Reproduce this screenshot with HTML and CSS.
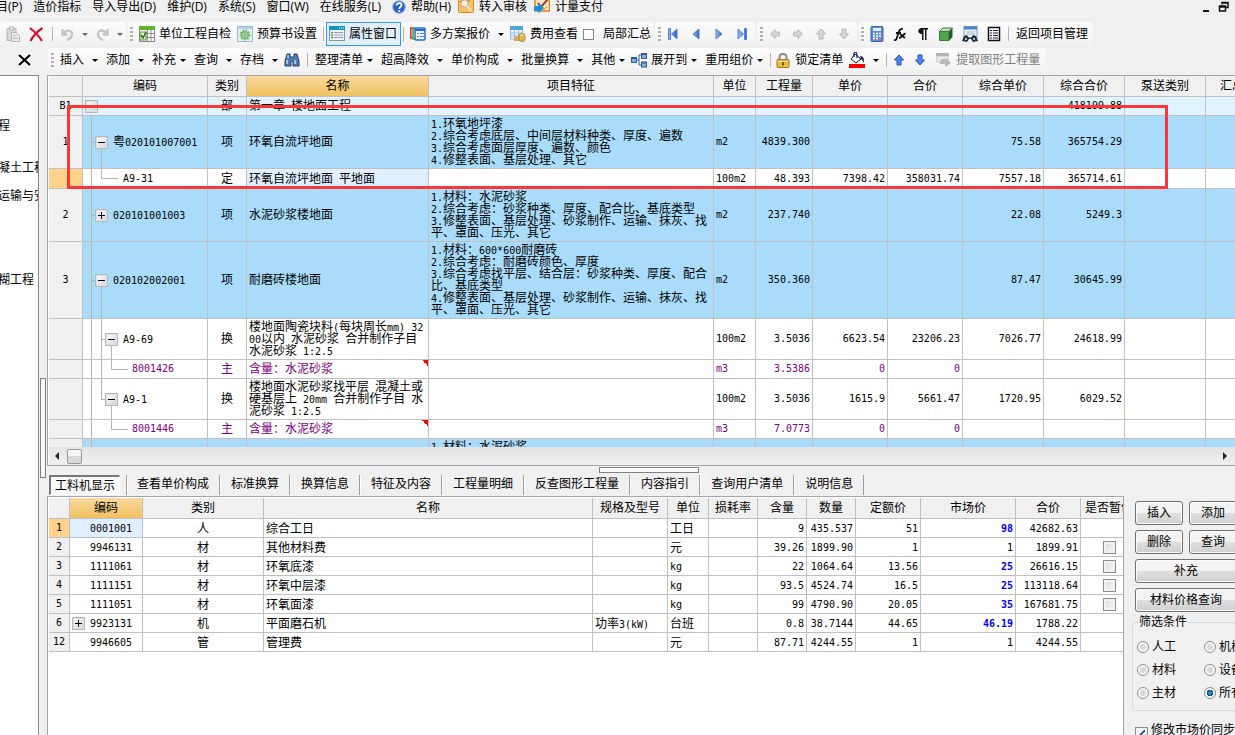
FILE: index.html
```html
<!DOCTYPE html>
<html lang="zh-CN">
<head>
<meta charset="utf-8">
<title>工程计价</title>
<link rel="stylesheet" href="styles.css">
</head>
<body>
<svg class="defs" aria-hidden="true">
  <defs>
    <linearGradient id="blue" x1="0" x2="1"><stop offset="0" stop-color="#9cc0f4"/><stop offset="1" stop-color="#2b5fd0"/></linearGradient>
    <symbol id="i-up" viewBox="0 0 10 12"><path d="M5 1l4.500 5h-2.500v5h-4v-5H.5z" stroke-width="1"/></symbol>
    <symbol id="i-left" viewBox="0 0 10 12"><path d="M.5 6l4.500-4.500v2.500h4.500v4H5v2.500z" stroke-width="1"/></symbol>
  </defs>
</svg>

<header class="top">
  <nav class="menu">
    <a href="#">项目(P)</a><a href="#">造价指标</a><a href="#">导入导出(D)</a><a href="#">维护(D)</a><a href="#">系统(S)</a><a href="#">窗口(W)</a><a href="#">在线服务(L)</a>
    <a href="#" class="wide"><svg width="14" height="14" viewBox="0 0 14 14"><circle cx="7" cy="7" r="6.300" fill="#2a62c4" stroke="#9fb9e4"/><path d="M4.600 5.500c0-3.300 5-3.200 4.900-.3C9.500 7 7.200 6.800 7.200 9" fill="none" stroke="#fff" stroke-width="1.800"/><circle cx="7.200" cy="11" r="1.100" fill="#fff"/></svg>帮助(H)</a>
    <a href="#"><svg width="16" height="16" viewBox="0 0 16 16"><rect x=".5" y="-1" width="15" height="14.500" rx="1" fill="#f6c26a" stroke="#dd8a24"/><path d="M2 2l4 4 6-5" fill="none" stroke="#c86f2c"/><circle cx="6.500" cy="4.500" r="3.700" fill="#fdf3dd" stroke="#b9a283"/><path d="M9 7l4.500 5" stroke="#eee1c9" stroke-width="2.500"/></svg>转入审核</a>
    <a href="#"><svg width="16" height="16" viewBox="0 0 16 16"><rect x="1" y="-1" width="14.500" height="13" fill="#fbe7c0" stroke="#e8801e" stroke-width="1.500"/><path d="M4 4l3 4 7-8" fill="none" stroke="#b03434" stroke-width="2"/><path d="M0 7h4l1-3 5 5-5 5-1-2H0z" fill="#1d90dc"/><path d="M9 11l4-3" stroke="#e8801e"/></svg>计量支付</a>
    <span class="winctl"><svg width="26" height="13" viewBox="0 0 26 13" fill="none" stroke="#111"><path d="M0 10h6" stroke-width="2"/><path d="M19 3.500v-2h6v5h-2M19 2h6M16.500 5h6v5h-6zM16 6h7" stroke-width="1.500"/></svg></span>
  </nav>

  <div class="bars">
    <div class="bar b1">
      <button type="button" aria-label="粘贴"><svg width="15" height="17" viewBox="0 0 15 17" fill="#eee" stroke="#b4b4b4"><path d="M1 2.500h9v12H1z" fill="#d8d8d8"/><path d="M3.500 1h4v3h-4z"/><path d="M5.500 6.500h5l3 3v6h-8z"/><path d="M7 10h4M7 12.500h5"/></svg></button>
      <button type="button" aria-label="删除"><svg width="15" height="15" viewBox="0 0 15 15" stroke="#d2122e" stroke-width="2.200" fill="none"><path d="M1 1c5 4 9 8 12 13M13.500 1C9 4 4 9 1.500 14"/></svg></button>
      <i class="sep"></i>
      <button type="button" class="drop" aria-label="撤销"><svg width="13" height="13" viewBox="0 0 13 13" fill="none" stroke="#c6c6c6" stroke-width="2.500"><path d="M1.500 1v5.500h5M2 6c4-5 9-4 9 0 0 3-2 5-5 6"/></svg></button>
      <button type="button" class="drop" aria-label="恢复"><svg width="13" height="13" viewBox="0 0 13 13" fill="none" stroke="#c6c6c6" stroke-width="2.500"><path d="M11.500 1v5.500h-5M11 6C7 1 2 2 2 6c0 3 2 5 5 6"/></svg></button>
    </div>
    <div class="bar b2">
      <i class="grip"></i>
      <button type="button"><svg width="16" height="16" viewBox="0 0 16 16"><rect x=".5" y=".5" width="15" height="15" fill="#fff" stroke="#888"/><path d="M0 0h16v4H0z" fill="#5fb52b"/><path d="M8.500 4v11M12 4v11M7 7.500h9M7 11.500h9" stroke="#8e8e8e"/><rect x="1" y="6" width="6" height="8" fill="#e1efd3" stroke="#5a9c33"/><path d="M2 9l2 3 3-6" stroke="#277213" fill="none" stroke-width="1.500"/></svg>单位工程自检</button>
      <button type="button"><svg width="16" height="16" viewBox="0 0 16 16"><rect x=".5" y=".5" width="15" height="15" fill="#e6f3e8" stroke="#9ab8d8"/><path d="M1 2h14" stroke="#b8d0ec" stroke-width="2"/><circle cx="8" cy="9" r="4.500" fill="none" stroke="#76b874" stroke-width="2" stroke-dasharray="2 1"/><circle cx="8" cy="9" r="3.300" fill="#cae6c8" stroke="#4f9c50"/><circle cx="8" cy="9" r="1.300" fill="#fff" stroke="#4f9c50"/></svg>预算书设置</button>
      <i class="sep"></i>
      <button type="button" class="on"><svg width="16" height="16" viewBox="0 0 16 16"><rect x=".5" y=".5" width="15" height="14" fill="#f2f6f7" stroke="#7f98ab"/><path d="M0 0h16v4H0z" fill="#1593ba"/><path d="M10 2h1M12 2h1M14 2h1" stroke="#fff"/><path d="M2 6.500h2M2 9h2M2 11.500h2" stroke="#3c9a52" stroke-width="1.500"/><path d="M5 6.500h9M5 9h9M5 11.500h9" stroke="#8fa0ac"/></svg>属性窗口</button>
      <i class="sep"></i>
      <button type="button" class="drop"><svg width="16" height="14" viewBox="0 0 16 14" fill="none"><path d="M3 1H.8v10H3" stroke="#e02828" stroke-width="1.500"/><path d="M5 1H3v11h2" stroke="#3ba636" stroke-width="1.500"/><rect x="5" y="1" width="10" height="12" rx="1" fill="#eef5ff" stroke="#246bd7" stroke-width="1.500"/><path d="M5 3h10" stroke="#246bd7" stroke-width="2"/><path d="M7 6.500h2M10 6.500h4M7 9.500h2M10 9.500h4" stroke="#5384d2"/></svg>多方案报价</button>
      <button type="button"><svg width="16" height="16" viewBox="0 0 16 16"><rect x=".5" y="1" width="12" height="12" fill="#eaf6fc" stroke="#8fc4df"/><path d="M0 0h13v4H0z" fill="#4da5d8"/><path d="M4.500 4v9M8.500 4v9M1 7h11M1 10h11" stroke="#8fc4df"/><path d="M4 11c3-2 6 0 6 2v2H4z" fill="#d8ac55"/><ellipse cx="12" cy="9" rx="3" ry="1.500" fill="#f2d28a" stroke="#b88632"/><path d="M9 10v4c2 2 5 2 6 0v-4" fill="#dfb25b" stroke="#b88632"/></svg>费用查看</button>
      <label><input type="checkbox" class="flat">局部汇总</label>
    </div>
    <div class="bar b3">
      <i class="grip"></i>
      <button type="button" aria-label="首条"><svg width="10" height="12" viewBox="0 0 10 12" fill="url(#blue)" stroke="#5583db"><path d="M.5.5h2v11h-2zM9 1v10L3.500 6z"/></svg></button>
      <button type="button" aria-label="上一条"><svg width="10" height="12" viewBox="0 0 10 12" fill="url(#blue)" stroke="#5583db"><path d="M8 1v10L2 6z"/></svg></button>
      <button type="button" aria-label="下一条"><svg width="10" height="12" viewBox="0 0 10 12" fill="url(#blue)" stroke="#5583db"><path d="M2 1v10l6-5z"/></svg></button>
      <button type="button" aria-label="末条"><svg width="10" height="12" viewBox="0 0 10 12" fill="url(#blue)" stroke="#5583db"><path d="M7.500.5h2v11h-2zM1 1v10l5.500-5z"/></svg></button>
    </div>
    <div class="bar b3 grey">
      <i class="grip"></i>
      <button type="button" aria-label="左移"><svg width="10" height="12"><use href="#i-left"/></svg></button>
      <button type="button" aria-label="右移"><svg class="flip" width="10" height="12"><use href="#i-left"/></svg></button>
      <button type="button" aria-label="上移"><svg width="10" height="12"><use href="#i-up"/></svg></button>
      <button type="button" aria-label="下移"><svg class="flip" width="10" height="12"><use href="#i-up"/></svg></button>
    </div>
    <div class="bar b5">
      <i class="grip"></i>
      <button type="button" aria-label="计算器"><svg width="14" height="16" viewBox="0 0 14 16"><rect x="1" y=".5" width="12" height="15" rx="1" fill="#608ccf" stroke="#3b64a8"/><path d="M3 2h8v3H3z" fill="#dff0ff"/><path d="M3 7.500h8M3 10h8M3 12.500h8" stroke="#fff" stroke-width="1.500" stroke-dasharray="2 1"/><path d="M9 12.500h2" stroke="#e44" stroke-width="1.500"/></svg></button>
      <button type="button" aria-label="函数"><svg width="14" height="16" viewBox="0 0 14 16" fill="none" stroke="#111" stroke-width="1.800"><path d="M1 14c3 1 3-3 4-6s2-6 5-5M3 7h5M7 8l5 4M12.500 7.500C10 8 9 12 6 12"/></svg></button>
      <button type="button" aria-label="段落标记"><svg width="14" height="16" viewBox="0 0 14 16"><path d="M12 2H6C1 2 1 8 6 8v6h1.500V3.500H9V14h1.500V3.500H12z" fill="#111"/></svg></button>
      <button type="button" aria-label="模型"><svg width="14" height="14" viewBox="0 0 14 14"><path d="M4 1h9.500L10 4.500H.5z" fill="#b4dfb0" stroke="#3d7d3b"/><path d="M.5 4.500H10v9H.5z" fill="#4fa34c" stroke="#3d7d3b"/><path d="M10 4.500L13.500 1v9L10 13.500z" fill="#24592a"/></svg></button>
      <button type="button" aria-label="查找"><svg width="16" height="16" viewBox="0 0 16 16"><rect x="2" y=".5" width="13" height="11" fill="#edf4fc" stroke="#779cc8"/><path d="M2 2h13" stroke="#4c86cf" stroke-width="3"/><path d="M5 6h8M5 8h8" stroke="#9db7d7"/><path d="M2 10l3-1 2 3h2l2-3 3 1 2 5-5 1-2-3H7l-2 3-5-1z" fill="#263242"/><path d="M3 13h2M11 13h2" stroke="#a8bdd4" stroke-width="2"/></svg></button>
      <button type="button" aria-label="列表"><svg width="14" height="16" viewBox="0 0 14 16"><rect x="1.500" y="1.500" width="11" height="13" fill="#fff" stroke="#111" stroke-width="1.500"/><path d="M3 4.500h2M3 7h2M3 9.500h2M3 12h2M6 4.500h5M6 7h5M6 9.500h5M6 12h5" stroke="#15154f"/></svg></button>
      <i class="sep"></i>
      <button type="button">返回项目管理</button>
    </div>
  </div>

  <div class="bars second">
    <button type="button" class="close" aria-label="关闭"><svg width="13" height="12" viewBox="0 0 13 12" fill="none" stroke="#000" stroke-width="2"><path d="M1 1l11 10M12 1L1 11"/></svg></button>
    <div class="bar b6">
      <i class="grip"></i>
      <button type="button" class="drop">插入</button>
      <button type="button" class="drop">添加</button>
      <button type="button" class="drop tight">补充</button>
      <button type="button" class="drop">查询</button>
      <button type="button" class="drop">存档</button>
      <button type="button" class="pic" aria-label="查找"><svg width="16" height="14" viewBox="0 0 16 14"><path d="M3 1h3v3h4V1h3l2 7v5H9V8H7v5H1V8z" fill="#4f7ca8" stroke="#1f456b"/><path d="M3 7v4M11 7v4M4 2v3" stroke="#bad8f2" stroke-width="1.500"/></svg></button>
      <i class="sep"></i>
      <button type="button" class="drop tight">整理清单</button>
      <button type="button" class="drop">超高降效</button>
      <button type="button" class="drop">单价构成</button>
      <button type="button" class="drop">批量换算</button>
      <button type="button" class="drop tight">其他</button>
      <button type="button" class="drop tight pic"><svg width="16" height="15" viewBox="0 0 16 15"><path d="M5 7h3V2h3M8 7v5h3" fill="none" stroke="#345f9f"/><rect x=".5" y="4.500" width="5" height="5" fill="#83afe3" stroke="#315b97"/><rect x="10.500" y=".5" width="5" height="5" fill="#83afe3" stroke="#315b97"/><rect x="10.500" y="9" width="5" height="5" fill="#83afe3" stroke="#315b97"/><path d="M1 5.500h4M11 1.500h4M11 10h4" stroke="#315b97"/></svg>展开到</button>
      <button type="button" class="drop tight">重用组价</button>
      <i class="sep"></i>
      <button type="button" class="gap"><svg width="14" height="15" viewBox="0 0 14 15"><path d="M3.500 7V4c0-4 7-4 7 0v3" fill="none" stroke="#8c8c8c" stroke-width="2"/><rect x="1" y="6.500" width="12" height="8" rx="1" fill="#ebb94a" stroke="#a97815"/><path d="M2 8.500h10" stroke="#fae3a1"/><path d="M7 9v3.500" stroke="#5c3c05" stroke-width="1.500"/></svg>锁定清单</button>
      <button type="button" class="drop pic" aria-label="填充颜色"><svg width="16" height="16" viewBox="0 0 16 16"><path d="M0 12h16v4H0z" fill="#f00"/><path d="M6 2l6 5-5 4-5-4z" fill="#fff" stroke="#111"/><path d="M5 5c-1-6 3-6 3-2v3" fill="none" stroke="#142f7c" stroke-width="1.300"/><path d="M11 4c4 0 4 3 4 7-1-2-2-3-3-4z" fill="#182c68"/></svg></button>
      <i class="sep"></i>
      <button type="button" class="arr" aria-label="上移"><svg width="10" height="12"><use href="#i-up"/></svg></button>
      <button type="button" class="arr" aria-label="下移"><svg class="flip" width="10" height="12"><use href="#i-up"/></svg></button>
      <button type="button" class="off" disabled><svg width="16" height="16" viewBox="0 0 16 16"><path d="M0 1h13v10H0z" fill="#d8d8d8"/><path d="M0 1h13v3H0z" fill="#b3b3b3"/><path d="M4 7h5V5l6 6-6 4v-3H4z" fill="#b8b8b8"/><path d="M2 6h9M2 8h3" stroke="#fff"/></svg>提取图形工程量</button>
    </div>
  </div>
</header>

<div class="work">
  <aside class="tree">
    <ul><li>程</li><li>凝土工程</li><li>运输与安装</li><li>糊工程</li></ul>
  </aside>
  <div class="split-v"><i></i></div>

  <main class="main">
    <section class="grid-box">
      <div class="clip">
        <table class="grid big">
          <colgroup><col class="w34"><col class="w125"><col class="w39"><col class="w182"><col class="w285"><col class="w42"><col class="w57"><col class="w75"><col class="w75"><col class="w81"><col class="w81"><col class="w81"><col></colgroup>
          <thead><tr><th></th><th>编码</th><th>类别</th><th class="sel">名称</th><th>项目特征</th><th>单位</th><th>工程量</th><th>单价</th><th>合价</th><th>综合单价</th><th>综合合价</th><th>泵送类别</th><th class="cut">汇总类别</th></tr></thead>
          <tbody>
            <tr class="pale"><th>B1</th><td class="code lv0"><button type="button" class="tg dim" aria-label="折叠"></button></td><td class="c">部</td><td>第一章<span class="n"> </span>楼地面工程</td><td></td><td></td><td></td><td></td><td></td><td></td><td class="r">418199.88</td><td></td><td></td></tr>
            <tr class="blue h53"><th>1</th><td class="code open1"><button type="button" class="tg" aria-label="折叠"></button><b>粤</b>020101007001</td><td class="c">项</td><td>环氧自流坪地面</td><td><span class="n">1.</span>环氧地坪漆<br><span class="n">2.</span>综合考虑底层、中间层材料种类、厚度、遍数<br><span class="n">3.</span>综合考虑面层厚度、遍数、颜色<br><span class="n">4.</span>修整表面、基层处理、其它</td><td class="u">m2</td><td class="r">4839.300</td><td></td><td></td><td class="r">75.58</td><td class="r">365754.29</td><td></td><td></td></tr>
            <tr class="h20"><th class="sel"></th><td class="code leaf1">A9-31</td><td class="c">定</td><td class="cur">环氧自流坪地面<span class="n"> </span>平地面</td><td></td><td class="u">100m2</td><td class="r">48.393</td><td class="r">7398.42</td><td class="r">358031.74</td><td class="r">7557.18</td><td class="r">365714.61</td><td></td><td></td></tr>
            <tr class="blue h53"><th>2</th><td class="code shut1"><button type="button" class="tg plus" aria-label="展开"></button>020101001003</td><td class="c">项</td><td>水泥砂浆楼地面</td><td><span class="n">1.</span>材料：水泥砂浆<br><span class="n">2.</span>综合考虑：砂浆种类、厚度、配合比、基底类型<br><span class="n">3.</span>修整表面、基层处理、砂浆制作、运输、抹灰、找<br>平、罩面、压光、其它</td><td class="u">m2</td><td class="r">237.740</td><td></td><td></td><td class="r">22.08</td><td class="r">5249.3</td><td></td><td></td></tr>
            <tr class="blue h77"><th>3</th><td class="code open1"><button type="button" class="tg" aria-label="折叠"></button>020102002001</td><td class="c">项</td><td>耐磨砖楼地面</td><td><span class="n">1.</span>材料：<span class="n">600*600</span>耐磨砖<br><span class="n">2.</span>综合考虑：耐磨砖颜色、厚度<br><span class="n">3.</span>综合考虑找平层、结合层：砂浆种类、厚度、配合<br>比、基底类型<br><span class="n">4.</span>修整表面、基层处理、砂浆制作、运输、抹灰、找<br>平、罩面、压光、其它</td><td class="u">m2</td><td class="r">350.360</td><td></td><td></td><td class="r">87.47</td><td class="r">30645.99</td><td></td><td></td></tr>
            <tr class="h41"><th></th><td class="code open2"><button type="button" class="tg" aria-label="折叠"></button>A9-69</td><td class="c">换</td><td>楼地面陶瓷块料<span class="n">(</span>每块周长<span class="n">mm) 32<br>00</span>以内<span class="n"> </span>水泥砂浆<span class="n"> </span>合并制作子目<br>水泥砂浆<span class="n"> 1:2.5</span></td><td></td><td class="u">100m2</td><td class="r">3.5036</td><td class="r">6623.54</td><td class="r">23206.23</td><td class="r">7026.77</td><td class="r">24618.99</td><td></td><td></td></tr>
            <tr class="main-mat"><th></th><td class="code leaf2">8001426</td><td class="c">主</td><td class="note">含量：水泥砂浆</td><td></td><td class="u">m3</td><td class="r">3.5386</td><td class="r">0</td><td class="r">0</td><td></td><td></td><td></td><td></td></tr>
            <tr class="h41"><th></th><td class="code open2 last"><button type="button" class="tg" aria-label="折叠"></button>A9-1</td><td class="c">换</td><td>楼地面水泥砂浆找平层<span class="n"> </span>混凝土或<br>硬基层上<span class="n"> 20mm </span>合并制作子目<span class="n"> </span>水<br>泥砂浆<span class="n"> 1:2.5</span></td><td></td><td class="u">100m2</td><td class="r">3.5036</td><td class="r">1615.9</td><td class="r">5661.47</td><td class="r">1720.95</td><td class="r">6029.52</td><td></td><td></td></tr>
            <tr class="main-mat"><th></th><td class="code leaf2 last">8001446</td><td class="c">主</td><td class="note">含量：水泥砂浆</td><td></td><td class="u">m3</td><td class="r">7.0773</td><td class="r">0</td><td class="r">0</td><td></td><td></td><td></td><td></td></tr>
            <tr class="blue h53"><th></th><td class="code lv0 guide"></td><td></td><td></td><td><span class="n">1.</span>材料：水泥砂浆<br><br><br><br></td><td></td><td></td><td></td><td></td><td></td><td></td><td></td><td></td></tr>
          </tbody>
        </table>
      </div>
      <div class="hscroll"><i class="tri l"></i><i class="thumb"></i><i class="tri r"></i></div>
      <div class="mark"></div>
    </section>

    <div class="split-h"><i></i></div>

    <nav class="tabs">
      <button type="button" class="active">工料机显示</button><button type="button">查看单价构成</button><button type="button">标准换算</button><button type="button">换算信息</button><button type="button">特征及内容</button><button type="button">工程量明细</button><button type="button">反查图形工程量</button><button type="button">内容指引</button><button type="button">查询用户清单</button><button type="button">说明信息</button><i></i>
    </nav>

    <div class="lower">
      <section class="grid-box low">
        <table class="grid small">
          <colgroup><col class="w21"><col class="w73"><col class="w121"><col><col class="w75"><col class="w41"><col class="w49"><col class="w49"><col class="w49"><col class="w65"><col class="w95"><col class="w65"><col class="w42"></colgroup>
          <thead><tr><th></th><th class="sel">编码</th><th>类别</th><th>名称</th><th>规格及型号</th><th>单位</th><th>损耗率</th><th>含量</th><th>数量</th><th>定额价</th><th>市场价</th><th>合价</th><th class="cut">是否暂估</th></tr></thead>
          <tbody>
            <tr><th class="sel">1</th><td class="id cur">0001001</td><td class="c">人</td><td>综合工日</td><td></td><td>工日</td><td></td><td class="r">9</td><td class="r">435.537</td><td class="r">51</td><td class="r hot">98</td><td class="r">42682.63</td><td></td></tr>
            <tr><th>2</th><td class="id">9946131</td><td class="c">材</td><td>其他材料费</td><td></td><td>元</td><td></td><td class="r">39.26</td><td class="r">1899.90</td><td class="r">1</td><td class="r">1</td><td class="r">1899.91</td><td class="k"><input type="checkbox" aria-label="暂估 9946131"></td></tr>
            <tr><th>3</th><td class="id">1111061</td><td class="c">材</td><td>环氧底漆</td><td></td><td class="u">kg</td><td></td><td class="r">22</td><td class="r">1064.64</td><td class="r">13.56</td><td class="r hot">25</td><td class="r">26616.15</td><td class="k"><input type="checkbox" aria-label="暂估 1111061"></td></tr>
            <tr><th>4</th><td class="id">1111151</td><td class="c">材</td><td>环氧中层漆</td><td></td><td class="u">kg</td><td></td><td class="r">93.5</td><td class="r">4524.74</td><td class="r">16.5</td><td class="r hot">25</td><td class="r">113118.64</td><td class="k"><input type="checkbox" aria-label="暂估 1111151"></td></tr>
            <tr><th>5</th><td class="id">1111051</td><td class="c">材</td><td>环氧面漆</td><td></td><td class="u">kg</td><td></td><td class="r">99</td><td class="r">4790.90</td><td class="r">20.05</td><td class="r hot">35</td><td class="r">167681.75</td><td class="k"><input type="checkbox" aria-label="暂估 1111051"></td></tr>
            <tr><th>6</th><td class="id has"><button type="button" class="tg plus" aria-label="展开"></button>9923131</td><td class="c">机</td><td>平面磨石机</td><td>功率<span class="n">3(kW)</span></td><td>台班</td><td></td><td class="r">0.8</td><td class="r">38.7144</td><td class="r">44.65</td><td class="r hot">46.19</td><td class="r">1788.22</td><td></td></tr>
            <tr><th>12</th><td class="id">9946605</td><td class="c">管</td><td>管理费</td><td></td><td>元</td><td></td><td class="r">87.71</td><td class="r">4244.55</td><td class="r">1</td><td class="r">1</td><td class="r">4244.55</td><td></td></tr>
          </tbody>
        </table>
      </section>

      <aside class="side">
        <div class="btns">
          <button type="button">插入</button><button type="button">添加</button>
          <button type="button">删除</button><button type="button">查询</button>
          <button type="button" class="full">补充</button>
          <button type="button" class="full">材料价格查询</button>
        </div>
        <fieldset>
          <legend>筛选条件</legend>
          <label><input type="radio" name="f">人工</label><label><input type="radio" name="f">机械</label>
          <label><input type="radio" name="f">材料</label><label><input type="radio" name="f">设备</label>
          <label><input type="radio" name="f">主材</label><label><input type="radio" name="f" checked>所有</label>
        </fieldset>
        <label class="sync"><input type="checkbox" checked>修改市场价同步</label>
      </aside>
    </div>
  </main>
</div>
</body>
</html>
```
FILE: styles.css
```css
* { box-sizing: border-box; }

body {
  margin: 0;
  height: 100vh;
  display: flex;
  flex-direction: column;
  overflow: hidden;
  background: #f0f0f0;
  color: #000;
  font: 12px/14px "Open Sans", "Noto Sans CJK SC", sans-serif;
  white-space: nowrap;
}

button { font: inherit; color: inherit; background: none; border: 0; padding: 0; margin: 0; white-space: nowrap; }
svg { display: block; flex: none; }
.defs { position: absolute; width: 0; height: 0; }
.flip { transform: rotate(180deg); }

/* menu */
.menu { display: flex; align-items: center; gap: 11px; height: 22px; padding-bottom: 8px; margin-left: -16px; }
.menu a { display: flex; align-items: center; gap: 5px; color: #000; text-decoration: none; }
.menu .wide ~ a { margin-left: -4px; }
.winctl { margin-left: auto; padding-right: 6px; }

/* tool bars */
.bars { display: flex; height: 24px; gap: 2px; }
.second { height: 24px; margin: 2px 0 3px; gap: 0; }
.bar { display: flex; align-items: center; border-radius: 3px; background: linear-gradient(#fcfcfc, #f1f1f1); }
.bar button, .bar label { display: flex; align-items: center; gap: 4px; height: 24px; flex: none; }
.drop::after { content: ""; border: 3px solid transparent; border-top-color: #000; border-bottom: 0; margin-left: 4px; }
.tight.drop::after { margin-left: 0; }
.sep { width: 1px; height: 14px; background: #b4b4b4; flex: none; }
.grip { width: 3px; height: 15px; flex: none; background: repeating-linear-gradient(#b0b0b0 0 2px, transparent 2px 4px); }

.b1 { width: 126px; padding-left: 6px; gap: 8px; }
.b1 .drop::after { border-top-color: #666; }
.b2 { width: 525px; padding-left: 2px; gap: 6px; }
.b2 .on { border: 1px solid #3399ff; background: #e2effb; padding: 0 3px 0 2px; margin: 0 -4px; }
.b2 label { gap: 9px; margin-left: -1px; }
.b3 { width: 100px; padding-left: 3px; gap: 13px; }
.b3 .grip { margin-right: -6px; }
.grey use { fill: #d6d6d6; stroke: #b9b9b9; }
.b5 { width: 234px; padding-left: 2px; gap: 9px; }
.b5 .grip { margin-right: -3px; }
.b5 .sep { margin: 0 -2px; }

.close { width: 48px; padding-left: 18px; }
.b6 { width: 998px; padding-left: 3px; gap: 8px; }
.b6 .grip { margin-right: -2px; }
.b6 .sep { margin: 0 -1px; }
.b6 .pic { margin-left: -2px; }
.b6 .gap { gap: 5px; margin-left: -2px; }
.arr { margin-right: 3px; }
.arr use { fill: #4b84ec; stroke: #2355bd; }
.off { color: #7d7d7d; }

input { appearance: none; margin: 0; flex: none; }
.flat { width: 11px; height: 11px; border: 1px solid #858585; background: #fff; }

/* work area */
.work { flex: 1; display: flex; min-height: 0; }
.tree { width: 39px; background: #fff; border: solid #828790; border-width: 1px 1px 0 0; overflow: hidden; }
.tree ul { list-style: none; margin: 0; padding: 43px 0 0; }
.tree li { height: 14px; margin-left: -2px; }
.tree li:nth-child(2) { margin-top: 28px; }
.tree li:nth-child(3) { margin-top: 14px; }
.tree li:nth-child(4) { margin-top: 70px; }
.split-v { width: 8px; padding: 303px 1px 0; }
.split-v i { display: block; width: 6px; height: 100px; border: 1px solid #808080; background: #f8f8f8; }
.main { flex: 1; min-width: 0; display: flex; flex-direction: column; }

.grid-box { position: relative; background: #fff; border: 1px solid #a5a5a9; border-right: 0; padding-left: 1px; }
.clip { height: 371px; overflow: hidden; }

.grid { table-layout: fixed; width: 100%; border-collapse: separate; border-spacing: 0; font-size: 12px; line-height: 12px; }
.grid th, .grid td { height: 19px; padding: 0 2px; border: solid #c0c0c0; border-width: 0 1px 1px 0; overflow: hidden; font-weight: normal; }
.grid thead th { height: 21px; background: #f0f0f0; }
.grid thead .sel { background: linear-gradient(#f9d9a0, #f1c15f); }
.grid th:last-child, .grid td:last-child { border-right: 0; }
.grid thead .cut { text-align: left; padding-left: 14px; }
.grid tbody th { background: #f0f0f0; }
.grid tbody .sel { background: #ffd28c; }
.grid td { text-align: left; }
.grid .c { text-align: center; }
.grid .r { text-align: right; }
.grid .cur { background-color: #e0efff; }
.grid .hot { color: #0000f0; font-weight: bold; }
.n { line-height: 0; white-space: pre; }
.n, .grid .r, .grid .u, .grid .id, .grid .code, .grid tbody th { font-family: "DejaVu Sans Mono", monospace; font-size: 10px; }
.pale td { background-color: #e1f3ff; }
.blue td { background-color: #a9dbfb; }
.main-mat td { color: #800080; }
.big .h20 > * { height: 20px; }
.big .h41 > * { height: 41px; }
.big .h53 > * { height: 53px; }
.big .h77 > * { height: 77px; }
.note { background: linear-gradient(45deg, transparent 50%, #f00 50%) right top / 6px 6px no-repeat; }

.w21 { width: 21px; } .w34 { width: 34px; } .w39 { width: 39px; } .w41 { width: 41px; }
.w42 { width: 42px; } .w49 { width: 49px; } .w57 { width: 57px; } .w65 { width: 65px; }
.w73 { width: 73px; } .w75 { width: 75px; } .w81 { width: 81px; } .w95 { width: 95px; }
.w121 { width: 121px; } .w125 { width: 125px; } .w182 { width: 182px; } .w285 { width: 285px; }

/* tree guides inside the code column */
.grid .code { --g: linear-gradient(#b4b4b4, #b4b4b4); background-repeat: no-repeat; background-image: var(--g), var(--g), var(--g), var(--g); }
.code b { font: 12px/12px "Noto Sans CJK SC", sans-serif; }
.grid .lv0 { padding-left: 2px; background-image: none; }
.grid .guide { background-image: var(--g); background-size: 1px 100%; background-position: 8px 0; }
.grid .open1, .grid .shut1 { padding-left: 12px; }
.open1 { background-size: 1px 100%, 5px 1px, 1px 50%, 0 0; background-position: 8px 0, 8px 50%, 18px 100%, 0 0; }
.shut1 { background-size: 1px 100%, 5px 1px, 0 0, 0 0; background-position: 8px 0, 8px 50%, 0 0, 0 0; }
.grid .leaf1 { padding-left: 40px; background-size: 1px 100%, 1px 50%, 17px 1px, 0 0; background-position: 8px 0, 18px 0, 18px 50%, 0 0; }
.grid .open2 { padding-left: 22px; background-size: 1px 100%, 1px 100%, 5px 1px, 1px 50%; background-position: 8px 0, 18px 0, 18px 50%, 28px 100%; }
.grid .open2.last { background-size: 1px 100%, 1px 50%, 5px 1px, 1px 50%; }
.grid .leaf2 { padding-left: 49px; background-size: 1px 100%, 1px 100%, 1px 50%, 17px 1px; background-position: 8px 0, 18px 0, 28px 0, 28px 50%; }
.grid .leaf2.last { background-size: 1px 100%, 0 0, 1px 50%, 17px 1px; }

.tg {
  display: inline-block; width: 13px; height: 13px; margin-right: 5px; vertical-align: middle;
  border: 1px solid #b8b8b8; box-shadow: inset 0 0 0 1px #dedede;
  background: linear-gradient(#000, #000) center / 7px 1px no-repeat, linear-gradient(135deg, #fff, #cfd4da);
}
.tg.plus { background: linear-gradient(#000, #000) center / 7px 1px no-repeat, linear-gradient(#000, #000) center / 1px 7px no-repeat, linear-gradient(135deg, #fff, #cfd4da); }
.tg.dim { background: linear-gradient(135deg, #fff, #cfd4da); }

.grid .id { padding-left: 20px; }
.grid .id.has { padding-left: 2px; }
.grid .k { padding-left: 22px; }
.small tbody td { padding-top: 1px; }
.k input, .sync input { display: block; width: 13px; height: 13px; border: 1px solid #8c8c8c; background: linear-gradient(135deg, #d2d6da, #fbfbfb); box-shadow: inset 0 0 0 2px #f2f2f2; }

.hscroll { display: flex; align-items: center; height: 18px; padding: 0 8px 0 6px; background: linear-gradient(#e4e4e4, #efefef); }
.tri { border: 4px solid transparent; }
.tri.l { border-right-color: #222; border-left: 0; }
.tri.r { border-left-color: #222; border-right: 0; margin-left: auto; }
.thumb { width: 15px; height: 15px; margin-left: 8px; border: 1px solid #979797; border-radius: 2px; background: linear-gradient(#f6f6f6 45%, #dadada 50%); }

/* red marker drawn over the grid */
.mark { position: absolute; left: 19px; right: 67px; top: 29px; height: 84px; border: 3px solid #fb3636; }

.split-h { height: 7px; padding: 1px 0 0; display: flex; justify-content: center; }
.split-h i { width: 100px; height: 6px; margin-left: 16px; border: 1px solid #808080; background: #f8f8f8; }

.tabs { display: flex; align-items: center; height: 23px; padding-left: 2px; }
.tabs button { height: 20px; padding: 0 10px 2px; border-left: 1px solid #9d9d9d; box-shadow: inset 1px 0 #fff; }
.tabs button:nth-child(n+3) { padding-left: 11px; }
.tabs .active { padding: 1px 4px 0 4px; margin-right: 6px; background: #f8f8f8; border: 1px solid #fff; border-top: 2px solid #777; border-left: 2px solid #777; box-shadow: none; }
.tabs i { width: 1px; height: 20px; background: #9d9d9d; }

.lower { flex: 1; display: flex; min-height: 0; }
.low { flex: 1; min-width: 0; border-right: 1px solid #a5a5a9; border-bottom: 0; padding-top: 1px; overflow: hidden; }
.low thead .cut { padding-left: 4px; }

.side { width: 111px; padding: 5px 0 0 8px; overflow: hidden; }
.btns { width: 102px; display: grid; grid-template-columns: 48px 48px; gap: 5px 6px; margin-left: 3px; }
.btns button { height: 24px; border: 1px solid #707070; border-radius: 3px; box-shadow: inset 0 0 0 1px #fcfcfc; background: linear-gradient(#f3f3f3 48%, #dfdfdf 52%, #cfcfcf); }
.full { grid-column: span 2; }
fieldset { width: 120px; min-width: 0; height: 96px; margin: 3px 0 0; padding: 6px 0 0 5px; border: 1px solid #cfdce6; border-radius: 4px; display: grid; grid-template-columns: 67px 1fr; grid-auto-rows: 23px; align-items: center; }
fieldset legend { padding: 0 1px; margin-left: 0; }
fieldset label, .sync { display: flex; align-items: center; gap: 4px; }
fieldset label { gap: 3px; margin-left: -1px; }
fieldset input { width: 12px; height: 12px; border: 1px solid #8e8f8f; border-radius: 50%; background: radial-gradient(#d3d8dc 35%, #f6f6f6 50%); }
fieldset input:checked { background: radial-gradient(#2f9fd8 10%, #0b3d66 45%, #f4f4f4 50%); }
.sync { margin: 8px 0 0 3px; gap: 3px; }
.sync input { margin-top: 8px; }
.sync input:checked { background: linear-gradient(135deg, transparent 45%, #28479a 46% 58%, transparent 59%) #eef2f8; }
```
